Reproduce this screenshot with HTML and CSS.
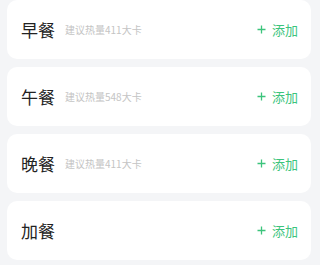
FILE: index.html
```html
<!DOCTYPE html>
<html lang="zh">
<head>
<meta charset="utf-8">
<link rel="stylesheet" href="styles.css">
</head>
<body>
<div class="list">
  <div class="card">
    <span class="title">早餐</span>
    <span class="hint">建议热量411大卡</span>
    <span class="add"><svg class="plus" viewBox="0 0 9 9"><path d="M4.5 0.5V8.5M0.5 4.5H8.5"/></svg>添加</span>
  </div>
  <div class="card">
    <span class="title">午餐</span>
    <span class="hint">建议热量548大卡</span>
    <span class="add"><svg class="plus" viewBox="0 0 9 9"><path d="M4.5 0.5V8.5M0.5 4.5H8.5"/></svg>添加</span>
  </div>
  <div class="card">
    <span class="title">晚餐</span>
    <span class="hint">建议热量411大卡</span>
    <span class="add"><svg class="plus" viewBox="0 0 9 9"><path d="M4.5 0.5V8.5M0.5 4.5H8.5"/></svg>添加</span>
  </div>
  <div class="card">
    <span class="title">加餐</span>
    <span class="add"><svg class="plus" viewBox="0 0 9 9"><path d="M4.5 0.5V8.5M0.5 4.5H8.5"/></svg>添加</span>
  </div>
</div>
</body>
</html>
```
FILE: styles.css
```css
html, body {
  margin: 0;
  padding: 0;
  background: #f4f5f7;
  font-family: "Noto Sans CJK SC", "Noto Sans", sans-serif;
}
.list {
  display: flex;
  flex-direction: column;
  gap: 8px;
  padding: 0 9px 0 7px;
}
.card {
  height: 59px;
  background: #ffffff;
  border-radius: 10px;
  display: flex;
  align-items: center;
  padding: 0 13px 0 14px;
}
.title {
  font-size: 17px;
  color: #222222;
  line-height: 1;
}
.hint {
  margin-left: 10px;
  font-size: 10px;
  color: #c4c4c4;
  line-height: 1;
}
.add {
  margin-left: auto;
  font-size: 13px;
  color: #3cc47c;
  display: flex;
  align-items: center;
  line-height: 1;
}
.plus {
  width: 9px;
  height: 9px;
  margin-right: 6px;
  fill: none;
  stroke: #3cc47c;
  stroke-width: 1.3;
}
```
